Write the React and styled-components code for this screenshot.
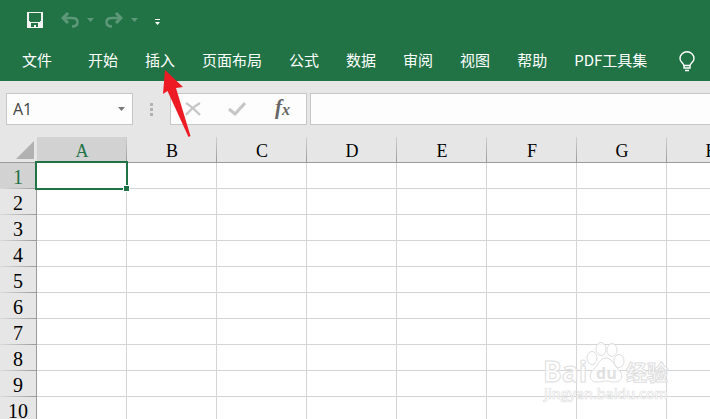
import React from 'react'
import styled, { createGlobalStyle, css } from 'styled-components'

const GlobalStyle = createGlobalStyle`
  *, *::before, *::after {
    box-sizing: border-box;
  }

  body {
    margin: 0;
    font-family: 'Noto Sans CJK SC', sans-serif;
    background: #fff;
  }

  button {
    margin: 0;
    padding: 0;
    border: 0;
    background: none;
    font: inherit;
    color: inherit;
  }
`

const Window = styled.div`
  position: relative;
  height: 100vh;
  overflow: hidden;
`

const Ribbon = styled.header`
  background: #217346;
  color: #fff;
`

const QuickAccess = styled.div`
  display: flex;
  align-items: center;
  height: 40px;
  padding-left: 26px;
`

const ToolButton = styled.button`
  display: flex;
  align-items: center;
  justify-content: center;
  width: ${p => p.$width}px;
  height: 24px;
  opacity: ${p => (p.disabled ? 0.27 : 1)};
`

const Spacer = styled.span`
  width: ${p => p.$width}px;
`

const Tabs = styled.nav`
  display: flex;
  align-items: center;
  gap: 27px;
  height: 41px;
  padding-left: 22px;
`

const Tab = styled.button`
  flex: none;
  margin-right: ${p => (p.$file ? 9 : 0)}px;
  padding-bottom: 2px;
  font-size: 15px;
  line-height: 24px;
  white-space: nowrap;
`

const TellMe = styled.button`
  display: flex;
  margin-left: 5px;
  padding-top: 2px;
`

const FormulaBar = styled.div`
  display: flex;
  align-items: center;
  height: 56px;
  padding-left: 6px;
  background: #e6e6e6;
`

const Box = styled.div`
  display: flex;
  align-items: center;
  height: 32px;
  border: 1px solid #c6c6c6;
  background: #fdfdfd;
`

const NameBox = styled(Box)`
  width: 127px;
  padding: 0 7px 0 6px;
  justify-content: space-between;
`

const NameInput = styled.input`
  width: 80px;
  padding: 0;
  border: 0;
  outline: 0;
  background: none;
  color: #444;
  font: 16px/22px 'Open Sans', sans-serif;
`

const DropButton = styled.button`
  display: flex;
`

const Grip = styled.div`
  display: grid;
  gap: 2px;
  margin: 0 17px;

  i {
    width: 3px;
    height: 3px;
    background: #b1b1b1;
  }
`

const Actions = styled(Box)`
  width: 137px;
  padding-right: 3px;
  justify-content: space-around;
  margin-right: 3px;
`

const FormulaInput = styled.input`
  flex: 1;
  min-width: 0;
  height: 32px;
  border: 1px solid #c6c6c6;
  border-right: 0;
  border-radius: 0;
  outline: 0;
  background: #fdfdfd;
`

const Sheet = styled.table`
  width: 757px;
  table-layout: fixed;
  border-collapse: separate;
  border-spacing: 0;
  background: #fff;
  font-family: 'Liberation Serif', serif;
`

const Corner = styled.th`
  width: 37px;
  height: 26px;
  padding: 0 3px 3px 0;
  border-bottom: 1px solid #9b9b9b;
  background: #e6e6e6;
  line-height: 0;
  text-align: right;
  vertical-align: bottom;
`

const ColumnHead = styled.th`
  height: 26px;
  padding: 3px 0 0;
  border-bottom: 1px solid #9b9b9b;
  background: linear-gradient(#cfcfcf, #9b9b9b) right / 1px 100% no-repeat
    ${p => (p.$active ? '#d2d2d2' : '#e6e6e6')};
  color: ${p => (p.$active ? '#217346' : '#000')};
  font-size: 18px;
  font-weight: normal;
  line-height: 22px;
`

const RowHead = styled.th`
  height: 26px;
  padding: 3px 0 0;
  border-right: 1px solid #9b9b9b;
  background: linear-gradient(90deg, #dadada, #9b9b9b) bottom / 100% 1px no-repeat
    ${p => (p.$active ? '#d2d2d2' : '#e6e6e6')};
  color: ${p => (p.$active ? '#217346' : '#000')};
  font-size: 20px;
  font-weight: normal;
  line-height: 23px;
`

const Cell = styled.td`
  padding: 0;
  border-right: 1px solid #d4d4d4;
  border-bottom: 1px solid #d4d4d4;

  ${p => p.$active && css`
    position: relative;

    &::before {
      content: '';
      position: absolute;
      inset: -2px;
      border: 2px solid #217346;
    }

    &::after {
      content: '';
      position: absolute;
      right: -4px;
      bottom: -4px;
      width: 7px;
      height: 7px;
      border: 1px solid #fff;
      background: #217346;
    }
  `}
`

const Pointer = styled.svg`
  position: absolute;
  left: 160px;
  top: 70px;
  pointer-events: none;
`

const Watermark = styled.svg`
  position: absolute;
  right: 38px;
  bottom: 10px;
  pointer-events: none;
`

const TABS = ['文件', '开始', '插入', '页面布局', '公式', '数据', '审阅', '视图', '帮助', 'PDF工具集']
const COLUMNS = ['A', 'B', 'C', 'D', 'E', 'F', 'G', 'H']
const ROWS = [1, 2, 3, 4, 5, 6, 7, 8, 9, 10]

function Caret({ color = '#fff' }) {
  return (
    <svg width="7" height="4" viewBox="0 0 7 4">
      <path d="M0 0h7L3.5 4z" fill={color} />
    </svg>
  )
}

function SaveIcon() {
  return (
    <svg width="16" height="16" viewBox="0 0 16 16" shapeRendering="crispEdges">
      <path fill="#f3f3f3" fillRule="evenodd" d="M0 0h16v16H0zM2 1v8h1v1h10v-1h1V1zM4 11v4h3v-2h2v2h2v-4z" />
    </svg>
  )
}

function UndoIcon({ flip }) {
  return (
    <svg width="18" height="16" viewBox="0 0 18 16">
      <g transform={flip ? 'matrix(-1 0 0 1 18 0)' : undefined} fill="none" stroke="#fff">
        <path d="M7 1L2 6l5 5" strokeWidth="3" />
        <path d="M2 6h9c3.5 0 5.5 1.5 5.5 4 0 3-2 4.5-5.5 4.5" strokeWidth="2.5" />
      </g>
    </svg>
  )
}

function BulbIcon() {
  return (
    <svg width="16" height="21" viewBox="0 0 16 21" fill="none" stroke="#fff">
      <path
        d="M5 17v-2C5 12 1 11.5 1 7.5a7 6.8 0 0 1 14 0C15 11.5 11 12 11 15v2zM5 14.5h6M6 19.5h4"
        strokeWidth="1.4"
      />
    </svg>
  )
}

function PointerArrow() {
  return (
    <Pointer width="32" height="70" viewBox="0 0 32 70">
      <path d="M5 0L23 17l-7 1 14.5 48-2 1L7.5 21 3 24z" fill="#ed1c24" />
    </Pointer>
  )
}

function BaiduMark() {
  return (
    <Watermark width="130" height="68" viewBox="0 0 130 68">
      <g fill="#fff" fillOpacity="0.7" stroke="#dedede" fontFamily="'Open Sans', sans-serif" fontWeight="bold">
        <text x="1" y="41" fontSize="28">Bai</text>
        <ellipse cx="50" cy="17" rx="5" ry="6.5" />
        <ellipse cx="59" cy="8" rx="5" ry="6.5" />
        <ellipse cx="70" cy="9" rx="5" ry="6.5" />
        <ellipse cx="77" cy="20" rx="5" ry="6.5" />
        <path d="M64 17c-6 0-8 7-12 11-6 5-5 13 3 13 4 0 6-1 9-1s5 1 9 1c8 0 9-8 3-13-4-4-6-11-12-11z" />
        <text x="54" y="38" fontSize="16" fill="#d4d4d4" stroke="none">du</text>
        <text x="84" y="39" fontSize="21" fontFamily="'Noto Sans CJK SC', sans-serif">经验</text>
        <text x="2" y="58" fontSize="14" fontWeight="600" strokeWidth="0.6">jingyan.baidu.com</text>
      </g>
    </Watermark>
  )
}

export default function App() {
  return (
    <Window>
      <GlobalStyle />
      <Ribbon>
        <QuickAccess>
          <ToolButton $width={18} aria-label="保存"><SaveIcon /></ToolButton>
          <Spacer $width={17} />
          <ToolButton $width={18} disabled aria-label="撤消"><UndoIcon /></ToolButton>
          <ToolButton $width={22} disabled aria-label="撤消选项"><Caret /></ToolButton>
          <Spacer $width={4} />
          <ToolButton $width={18} disabled aria-label="恢复"><UndoIcon flip /></ToolButton>
          <ToolButton $width={22} disabled aria-label="恢复选项"><Caret /></ToolButton>
          <Spacer $width={3} />
          <ToolButton $width={18} aria-label="自定义快速访问工具栏">
            <svg width="5" height="10" viewBox="0 0 5 10">
              <path d="M0 4h5v1H0zM0 7h5L2.5 10z" fill="#fff" />
            </svg>
          </ToolButton>
        </QuickAccess>
        <Tabs>
          {TABS.map((name, i) => <Tab key={name} $file={i === 0}>{name}</Tab>)}
          <TellMe aria-label="告诉我"><BulbIcon /></TellMe>
        </Tabs>
      </Ribbon>
      <FormulaBar>
        <NameBox>
          <NameInput aria-label="名称框" defaultValue="A1" />
          <DropButton aria-label="名称列表"><Caret color="#777" /></DropButton>
        </NameBox>
        <Grip><i /><i /><i /></Grip>
        <Actions>
          <ToolButton $width={24} aria-label="取消">
            <svg width="16" height="14" viewBox="0 0 16 14" fill="none" stroke="#c6c6c6" strokeWidth="2.2">
              <path d="M1 1c5 3 9 7 14 12M15 1C10 4 5 8 1 13" />
            </svg>
          </ToolButton>
          <ToolButton $width={24} aria-label="输入">
            <svg width="18" height="14" viewBox="0 0 18 14" fill="none" stroke="#c6c6c6" strokeWidth="3">
              <path d="M1 7l6 5L17 1" />
            </svg>
          </ToolButton>
          <ToolButton $width={24} aria-label="插入函数">
            <svg width="20" height="28" viewBox="0 0 20 28" fill="#666" fontFamily="'Liberation Serif', serif" fontStyle="italic" fontWeight="bold">
              <text x="4" y="19" fontSize="21">f</text>
              <text x="11" y="20" fontSize="16">x</text>
            </svg>
          </ToolButton>
        </Actions>
        <FormulaInput aria-label="编辑栏" />
      </FormulaBar>
      <Sheet>
        <thead>
          <tr>
            <Corner aria-label="全选">
              <svg width="18" height="18" viewBox="0 0 18 18"><path d="M18 0v18H0z" fill="#b1b1b1" /></svg>
            </Corner>
            {COLUMNS.map(c => <ColumnHead key={c} scope="col" $active={c === 'A'}>{c}</ColumnHead>)}
          </tr>
        </thead>
        <tbody>
          {ROWS.map(r => (
            <tr key={r}>
              <RowHead scope="row" $active={r === 1}>{r}</RowHead>
              {COLUMNS.map(c => <Cell key={c} $active={r === 1 && c === 'A'} />)}
            </tr>
          ))}
        </tbody>
      </Sheet>
      <PointerArrow />
      <BaiduMark />
    </Window>
  )
}
